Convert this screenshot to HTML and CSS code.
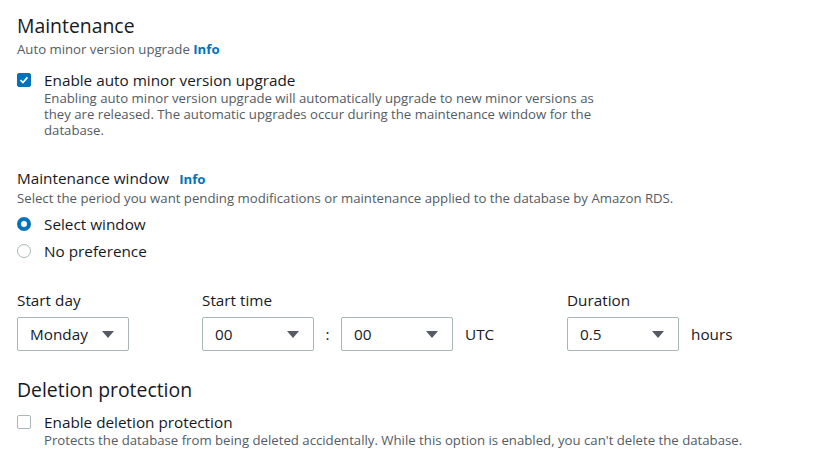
FILE: index.html
```html
<!DOCTYPE html>
<html>
<head>
<meta charset="utf-8">
<link rel="stylesheet" href="styles.css">
</head>
<body>
<div class="page">
  <section class="section">
    <h2 class="heading">Maintenance</h2>
    <div class="sublabel">Auto minor version upgrade <a class="info">Info</a></div>
    <div class="check-row first">
      <span class="checkbox checked">
        <svg width="14" height="14" viewBox="0 0 14 14"><path d="M3 7.2 L5.8 10 L11 4" fill="none" stroke="#fff" stroke-width="2"/></svg>
      </span>
      <div class="check-text">
        <div class="check-label">Enable auto minor version upgrade</div>
        <div class="desc">Enabling auto minor version upgrade will automatically upgrade to new minor versions as they are released. The automatic upgrades occur during the maintenance window for the database.</div>
      </div>
    </div>
  </section>

  <section class="section window">
    <div class="field-label">Maintenance window <a class="info">Info</a></div>
    <div class="desc">Select the period you want pending modifications or maintenance applied to the database by Amazon RDS.</div>
    <div class="radios">
      <div class="radio-row"><span class="radio checked"></span><span class="radio-label">Select window</span></div>
      <div class="radio-row"><span class="radio"></span><span class="radio-label">No preference</span></div>
    </div>
    <div class="selects">
      <div class="field day">
        <div class="field-label">Start day</div>
        <div class="select"><span>Monday</span><span class="caret"></span></div>
      </div>
      <div class="field time">
        <div class="field-label">Start time</div>
        <div class="inline">
          <div class="select"><span>00</span><span class="caret"></span></div>
          <span class="colon">:</span>
          <div class="select"><span>00</span><span class="caret"></span></div>
          <span class="unit">UTC</span>
        </div>
      </div>
      <div class="field duration">
        <div class="field-label">Duration</div>
        <div class="inline">
          <div class="select"><span>0.5</span><span class="caret"></span></div>
          <span class="unit">hours</span>
        </div>
      </div>
    </div>
  </section>

  <section class="section deletion">
    <h2 class="heading">Deletion protection</h2>
    <div class="check-row">
      <span class="checkbox"></span>
      <div class="check-text">
        <div class="check-label">Enable deletion protection</div>
        <div class="desc wide">Protects the database from being deleted accidentally. While this option is enabled, you can't delete the database.</div>
      </div>
    </div>
  </section>
</div>
</body>
</html>
```

FILE: styles.css
```css
* { box-sizing: border-box; }
html, body { margin: 0; padding: 0; background: #fff; }
body {
  font-family: "Open Sans", "Noto Sans", sans-serif;
  color: #16191f;
  font-size: 15.3px;
}
.page { padding: 14px 17px 0 17px; }
.heading {
  margin: 0;
  font-size: 19.4px;
  font-weight: 400;
  line-height: 24px;
}
.sublabel {
  font-size: 13.2px;
  color: #545b64;
  line-height: 16px;
  margin-top: 3px;
}
.info {
  color: #0073bb;
  font-weight: 700;
  font-size: 13.2px;
}
.check-row {
  display: flex;
  align-items: flex-start;
  gap: 13px;
}
.check-row.first { margin-top: 13px; }
.checkbox {
  flex: none;
  width: 14px;
  height: 14px;
  margin-top: 3px;
  border: 1px solid #aab7b8;
  border-radius: 2px;
  display: flex;
  align-items: center;
  justify-content: center;
}
.checkbox.checked {
  background: #0073bb;
  border-color: #0073bb;
}
.checkbox svg { display: block; }
.check-label { line-height: 20px; }
.desc {
  font-size: 13.2px;
  color: #545b64;
  line-height: 16px;
}
.check-text .desc { max-width: 570px; }
.check-text .desc.wide { max-width: 760px; }
.window { margin-top: 30px; }
.window .field-label .info { margin-left: 6px; }
.field-label { line-height: 20px; }
.window > .desc { margin-top: 1px; }
.radios { margin-top: 4px; }
.radio-row {
  display: flex;
  align-items: center;
  gap: 13px;
  height: 27px;
}
.radio {
  width: 14px;
  height: 14px;
  border-radius: 50%;
  border: 1px solid #aab7b8;
  flex: none;
}
.radio.checked {
  border: 4px solid #0073bb;
}
.selects {
  display: flex;
  margin-top: 26px;
}
.field .field-label { margin-bottom: 7px; }
.day { width: 185px; }
.time { width: 365px; }
.inline { display: flex; align-items: center; }
.select {
  width: 112px;
  height: 34px;
  border: 1px solid #aab7b8;
  border-radius: 2px;
  display: flex;
  align-items: center;
  justify-content: space-between;
  padding: 0 14px 0 12px;
}
.caret {
  width: 0; height: 0;
  border-left: 6px solid transparent;
  border-right: 6px solid transparent;
  border-top: 7px solid #545b64;
}
.colon { width: 27px; text-align: center; }
.unit { margin-left: 12px; }
.deletion { margin-top: 27px; }
.deletion .check-row { margin-top: 10px; }
```
